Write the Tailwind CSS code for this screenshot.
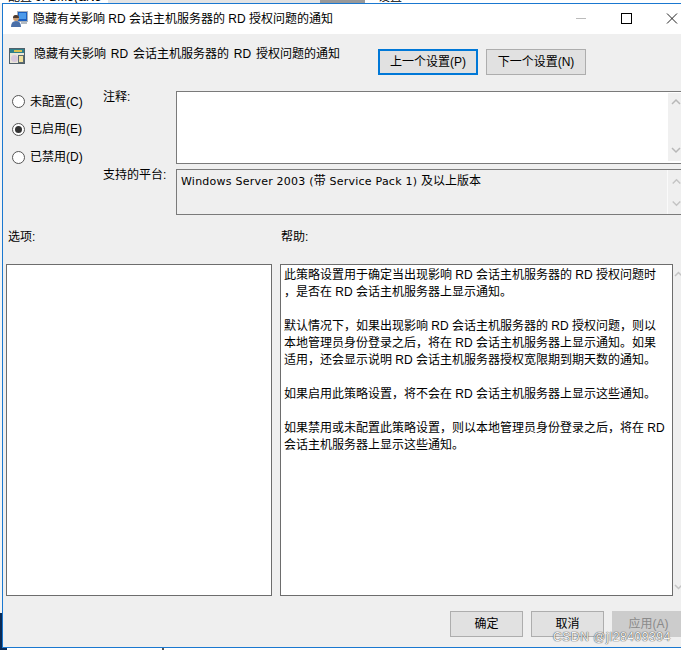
<!DOCTYPE html>
<html lang="zh-CN">
<head>
  <meta charset="UTF-8">
  <title>隐藏有关影响 RD 会话主机服务器的 RD 授权问题的通知</title>
  <script src="https://cdn.jsdelivr.net/npm/@tailwindcss/browser@4"></script>
</head>
<body class="relative w-[681px] h-[650px] overflow-hidden bg-[#f4f4f4] font-['Liberation_Sans','Noto_Sans_CJK_SC',sans-serif] text-[12px] text-black">
  <!-- sliver of the window behind -->
  <div class="h-[3px] flex overflow-hidden leading-[12px]">
    <div class="w-[108px] bg-white pl-[8px] mt-[-9px] whitespace-nowrap">配置 9FBM5(&amp;N5</div>
    <div class="w-[212px] bg-[#e4e4e4]"></div>
    <div class="w-[45px] bg-[#999999]"></div>
    <div class="flex-1 bg-white pl-[13px] mt-[-9px]">设置</div>
  </div>

  <!-- dark desktop strip to the left of the window -->
  <div class="absolute left-0 top-[613px] w-[2px] h-[37px] bg-[#0a2a55]"></div>

  <div class="relative w-[700px] h-[645px] ml-[2px] border-l-[1px] border-t-[1px] border-b-[1px] border-[#1a78d0] bg-[#efefef] flex flex-col">
    <!-- Title bar -->
    <div class="h-[30px] bg-white flex items-center shrink-0">
      <svg class="ml-[8px] w-[17px] h-[17px]" viewBox="0 0 17 17">
        <rect x="6.5" y="0.5" width="10" height="10" fill="#1c5fc0" stroke="#a9b2bc"/>
        <rect x="8" y="2" width="7" height="6" fill="#4c9aea"/>
        <rect x="10" y="11" width="6" height="2" fill="#b4bcc4"/>
        <circle cx="5" cy="7" r="3" fill="#c99a70"/>
        <path d="M5 4a3 3 0 0 1 3 3H2a3 3 0 0 1 3-3z" fill="#4a3a30"/>
        <path d="M0 16q0-6 5-6t5 6z" fill="#4a6fa8"/>
      </svg>
      <span class="ml-[5px]">隐藏有关影响 RD 会话主机服务器的 RD 授权问题的通知</span>
      <div class="ml-auto mr-[13px] flex items-center">
        <svg class="w-[46px] h-[14px]" viewBox="0 0 46 14"><path d="M9 6.5h10" stroke="#bbb" fill="none"/></svg>
        <svg class="w-[46px] h-[14px]" viewBox="0 0 46 14"><rect x="8.5" y="1.5" width="10" height="10" stroke="#000" fill="none"/></svg>
        <svg class="w-[30px] h-[14px]" viewBox="0 0 30 14"><path d="M8 1.5l10 10M18 1.5l-10 10" stroke="#222" fill="none"/></svg>
      </div>
    </div>

    <!-- Heading row -->
    <div class="h-[40px] flex shrink-0">
      <svg class="ml-[6px] mt-[14px] w-[16px] h-[16px]" viewBox="0 0 16 16">
        <rect x="0.5" y="0.5" width="15" height="15" fill="#e9e6d8" stroke="#50606a"/>
        <rect x="1" y="1" width="14" height="4" fill="#2e7f8c"/>
        <rect x="5" y="2" width="8" height="2" fill="#d8c050"/>
        <circle cx="5.5" cy="10.5" r="3.5" fill="#d8c8dc"/>
        <rect x="9.5" y="7.5" width="5" height="7" fill="#f2e29a" stroke="#5c6a70"/>
      </svg>
      <span class="ml-[9px] mt-[11px] leading-[18px] h-[18px] [word-spacing:1.5px]">隐藏有关影响 RD 会话主机服务器的 RD 授权问题的通知</span>
      <div class="absolute left-[375px] top-[45px] flex gap-[8px]">
        <button class="w-[100px] h-[26px] bg-[#e1e1e1] border-[2px] border-[#0078d7]">上一个设置(P)</button>
        <button class="w-[100px] h-[26px] bg-[#e1e1e1] border-[1px] border-[#adadad]">下一个设置(N)</button>
      </div>
    </div>

    <!-- Upper section -->
    <div class="flex h-[147px] shrink-0">
      <div class="w-[100px] pl-[9px] pt-[21px] flex flex-col gap-[14.75px] shrink-0">
        <label class="flex items-center gap-[5px] h-[13px]"><span class="w-[13px] h-[13px] rounded-full border border-[#555] bg-white"></span>未配置(C)</label>
        <label class="flex items-center gap-[5px] h-[13px]"><span class="w-[13px] h-[13px] rounded-full border border-[#555] bg-white flex items-center justify-center"><span class="w-[7px] h-[7px] rounded-full bg-[#333]"></span></span>已启用(E)</label>
        <label class="flex items-center gap-[5px] h-[13px]"><span class="w-[13px] h-[13px] rounded-full border border-[#555] bg-white"></span>已禁用(D)</label>
      </div>
      <div class="flex-1 flex flex-col">
        <div class="flex h-[90px] shrink-0">
          <div class="w-[73px] pt-[15px] leading-[16px] shrink-0">注释:</div>
          <div class="mt-[17px] w-[520px] h-[73px] bg-white border-y border-l border-[#7a7a7a] relative">
            <svg class="absolute left-[491px] top-[1px] w-[17px] h-[68px] bg-[#f0f0f0]" viewBox="0 0 17 68">
              <path d="M4 11l4-4 4 4M4 55l4 4 4-4" stroke="#b8b8b8" stroke-width="1.5" fill="none"/>
            </svg>
          </div>
        </div>
        <div class="flex mt-[5px]">
          <div class="w-[73px] mt-[-2px] leading-[16px] shrink-0">支持的平台:</div>
          <div class="w-[520px] h-[46px] border-y border-l border-[#7a7a7a] relative pl-[4px] pt-[3px] leading-[16px] whitespace-nowrap">
            <span class="font-['DejaVu_Sans'] text-[11px] tracking-[0.23px]">Windows Server 2003 (</span>带<span class="font-['DejaVu_Sans'] text-[11px] tracking-[0.23px]"> Service Pack 1) </span>及以上版本
            <svg class="absolute left-[490px] top-0 w-[18px] h-[44px] border-l border-[#fafafa]" viewBox="0 0 18 44">
              <path d="M5 13l4-4 4 4M5 32l4 4 4-4" stroke="#c4c4c4" stroke-width="1.5" fill="none"/>
            </svg>
          </div>
        </div>
      </div>
    </div>

    <!-- Labels -->
    <div class="flex h-[43px] shrink-0 pt-[8px] leading-[16px]">
      <div class="pl-[5px] w-[278px]">选项:</div>
      <div>帮助:</div>
    </div>

    <!-- Panes -->
    <div class="flex h-[332px] shrink-0">
      <div class="ml-[3px] w-[266px] bg-white border border-[#6d6d6d]"></div>
      <div class="ml-[8px] w-[393px] bg-white border border-[#6d6d6d] px-[3px] pt-[2px] leading-[17px] whitespace-nowrap">
        <p>此策略设置用于确定当出现影响 RD 会话主机服务器的 RD 授权问题时<br>，是否在 RD 会话主机服务器上显示通知。</p>
        <p class="mt-[17px]">默认情况下，如果出现影响 RD 会话主机服务器的 RD 授权问题，则以<br>本地管理员身份登录之后，将在 RD 会话主机服务器上显示通知。如果<br>适用，还会显示说明 RD 会话主机服务器授权宽限期到期天数的通知。</p>
        <p class="mt-[17px]">如果启用此策略设置，将不会在 RD 会话主机服务器上显示这些通知。</p>
        <p class="mt-[17px]">如果禁用或未配置此策略设置，则以本地管理员身份登录之后，将在 RD<br>会话主机服务器上显示这些通知。</p>
      </div>
      <svg class="ml-[1px] w-[9px] h-[332px]" viewBox="0 0 9 332">
        <path d="M1 12l3.500-3.500 3.500 3.500M1 321l3.500 3.500 3.500-3.500" stroke="#c4c4c4" stroke-width="1.5" fill="none"/>
      </svg>
    </div>

    <!-- Footer buttons -->
    <div class="flex gap-[8px] pt-[15px] pl-[447px]">
      <button class="w-[73px] h-[26px] bg-[#e1e1e1] border border-[#adadad]">确定</button>
      <button class="w-[73px] h-[26px] bg-[#e1e1e1] border border-[#adadad]">取消</button>
      <button class="w-[73px] h-[26px] bg-[#cccccc] text-[#8a8a8a]">应用(A)</button>
    </div>
    <!-- watermark -->
    <span class="absolute left-[550px] top-[624px] tracking-[0.6px] text-[#f4f4f4] [text-shadow:0_0_1px_#444,0_0_1px_#444]">CSDN @jl28409394</span>
  </div>

  <!-- sliver of the desktop under the window -->
  <div class="h-[2px] flex">
    <div class="w-[7px] bg-[#0a2a55]"></div>
    <div class="w-[155px] bg-white"></div>
    <div class="w-[2px] bg-[#555]"></div>
    <div class="flex-1 bg-white"></div>
  </div>
</body>
</html>
